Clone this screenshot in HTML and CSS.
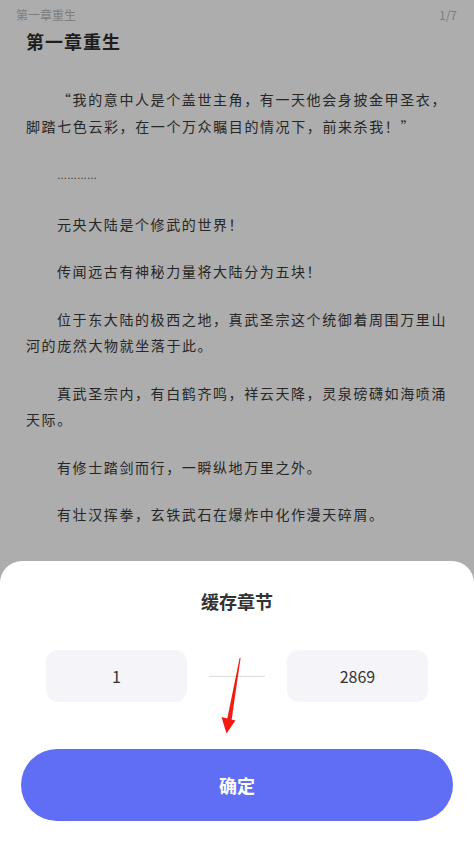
FILE: index.html
```html
<!DOCTYPE html>
<html lang="zh-CN">
<head>
  <meta charset="UTF-8">
  <meta name="viewport" content="width=device-width, initial-scale=1.0">
  <title>缓存章节</title>
  <link rel="stylesheet" href="styles.css">
</head>
<body>
  <div class="page">
    <!-- Reader (dimmed behind the sheet) -->
    <div class="reader">
      <div class="reader-top">
        <span>第一章重生</span>
        <span>1/7</span>
      </div>
      <h1 class="chapter-title">第一章重生</h1>
      <div class="chapter-text">
        <p>“我的意中人是个盖世主角，有一天他会身披金甲圣衣，脚踏七色云彩，在一个万众瞩目的情况下，前来杀我！”</p>
        <p><span class="dots">…………</span></p>
        <p>元央大陆是个修武的世界！</p>
        <p>传闻远古有神秘力量将大陆分为五块！</p>
        <p>位于东大陆的极西之地，真武圣宗这个统御着周围万里山河的庞然大物就坐落于此。</p>
        <p>真武圣宗内，有白鹤齐鸣，祥云天降，灵泉磅礴如海喷涌天际。</p>
        <p>有修士踏剑而行，一瞬纵地万里之外。</p>
        <p>有壮汉挥拳，玄铁武石在爆炸中化作漫天碎屑。</p>
      </div>
    </div>

    <!-- Cache chapters sheet -->
    <div class="sheet">
      <h2 class="sheet-title">缓存章节</h2>
      <div class="range">
        <div class="range-box">1</div>
        <div class="range-line"></div>
        <div class="range-box">2869</div>
      </div>
      <button class="confirm">确定</button>

      <!-- annotation arrow -->
      <svg class="arrow" width="30" height="82" viewBox="0 0 30 82">
        <polygon points="22.6,3 21.6,3 9.2,64 13.6,65" fill="#f21b14"/>
        <polygon points="3.5,62 17.5,65.5 8.5,78.5" fill="#f21b14"/>
      </svg>
    </div>
  </div>
</body>
</html>
```

FILE: styles.css
```css
* {
  box-sizing: border-box;
  margin: 0;
  padding: 0;
}

body {
  font-family: "Noto Sans CJK SC", "Noto Sans", sans-serif;
  background: #adadad;
}

.page {
  width: 474px;
  height: 843px;
  display: flex;
  flex-direction: column;
  overflow: hidden;
}

.reader {
  flex: 1;
  overflow: hidden;
}

.reader-top {
  display: flex;
  justify-content: space-between;
  padding: 7px 17px 0 16px;
  font-size: 12px;
  line-height: 16px;
  color: #7d7d7d;
}

.chapter-title {
  margin-top: 5px;
  padding-left: 26px;
  font-size: 18px;
  line-height: 26px;
  letter-spacing: 1px;
  font-weight: bold;
  color: #1e1e1e;
}

.chapter-text {
  margin-top: 32px;
  padding: 0 20px 0 26px;
  font-size: 14px;
  line-height: 26.5px;
  letter-spacing: 1.6px;
  color: #262626;
}

.chapter-text p {
  text-indent: 31px;
  margin-bottom: 21px;
}

.chapter-text .dots {
  font-family: "Liberation Sans", sans-serif;
  font-size: 10px;
  letter-spacing: 0;
}

.sheet {
  position: relative;
  height: 282px;
  background: #fff;
  border-radius: 22px 22px 0 0;
  padding-top: 28px;
  text-align: center;
}

.sheet-title {
  font-size: 18px;
  line-height: 24px;
  font-weight: bold;
  color: #333;
}

.range {
  margin-top: 37px;
  display: flex;
  justify-content: center;
  align-items: center;
  gap: 22px;
}

.range-box {
  width: 141px;
  height: 52px;
  line-height: 52px;
  background: #f5f5f9;
  border-radius: 12px;
  font-size: 16px;
  color: #333;
}

.range-line {
  width: 56px;
  height: 1px;
  background: #dcdcdc;
}

.confirm {
  display: block;
  margin: 47px auto 0;
  width: 432px;
  height: 72px;
  border: none;
  border-radius: 36px;
  background: #606ef5;
  color: #fff;
  font-family: inherit;
  font-size: 18px;
  font-weight: bold;
}

.arrow {
  position: absolute;
  left: 218px;
  top: 94px;
}
```
